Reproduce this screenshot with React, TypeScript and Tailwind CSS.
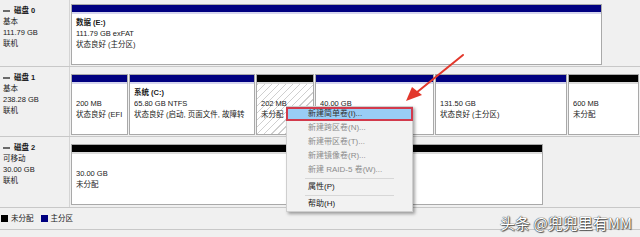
import React from "react";

const font = { fontFamily: '"Liberation Sans", "Noto Sans CJK SC", sans-serif' };

function Label({ name, lines }: { name: string; lines: string[] }) {
  return (
    <div className="w-[70px] shrink-0 border-r border-[#d4d4d4] bg-[#f0f0f0] pl-[3px] pt-[5px] text-[7.5px] leading-[11px] text-[#1a1a1a]">
      <div className="flex items-center gap-[4px] font-bold">
        <span className="inline-block h-[2px] w-[7px] bg-[#6a6a6a]" />
        <span>{name}</span>
      </div>
      {lines.map((l) => (
        <div key={l}>{l}</div>
      ))}
    </div>
  );
}

function Part({
  w,
  bar,
  title,
  lines,
  hatch,
}: {
  w: string;
  bar: "blue" | "black";
  title?: string;
  lines: string[];
  hatch?: boolean;
}) {
  return (
    <div className={`${w} flex h-[61px] shrink-0 flex-col overflow-hidden border border-[#a9a9a9] bg-white`}>
      <div
        className={
          bar === "blue"
            ? "h-[9px] shrink-0 border-b-[2px] border-[#d6d6ee] bg-[#000080]"
            : "h-[9px] shrink-0 border-b-[2px] border-[#dcdcdc] bg-black"
        }
      />
      <div
        className={
          hatch
            ? "flex-1 overflow-hidden whitespace-nowrap bg-[repeating-linear-gradient(135deg,#cfcfcf_0px,#cfcfcf_1px,#ffffff_1px,#ffffff_5px)] pl-[4px] pt-[3px] text-[7.5px] leading-[11px] text-[#1a1a1a]"
            : "flex-1 overflow-hidden whitespace-nowrap pl-[4px] pt-[3px] text-[7.5px] leading-[11px] text-[#1a1a1a]"
        }
      >
        <div className="h-[11px] font-bold">{title ?? ""}</div>
        {lines.map((l) => (
          <div key={l} className="overflow-hidden">
            {l}
          </div>
        ))}
      </div>
    </div>
  );
}

function MenuItem({ text, disabled, active }: { text: string; disabled?: boolean; active?: boolean }) {
  return (
    <div
      className={
        active
          ? "mx-[-1px] flex h-[14px] items-center border-[2px] border-[#d23a4c] bg-[#99cdf5] pl-[20px] text-[8px] text-[#333333]"
          : disabled
          ? "flex h-[14px] items-center pl-[21px] text-[8px] text-[#8c8c8c]"
          : "flex h-[14px] items-center pl-[21px] text-[8px] text-[#1a1a1a]"
      }
    >
      {text}
    </div>
  );
}

export default function App() {
  return (
    <div className="relative h-[237px] w-[640px] overflow-hidden bg-[#f0f0f0]" style={font}>
      {/* Disk 0 */}
      <div className="flex h-[67px] border-b border-[#c8c8c8]">
        <Label name="磁盘 0" lines={["基本", "111.79 GB", "联机"]} />
        <div className="flex flex-1 pl-[1px] pt-[4px]">
          <Part w="w-[531px]" bar="blue" title="数据  (E:)" lines={["111.79 GB exFAT", "状态良好 (主分区)"]} />
        </div>
      </div>
      {/* Disk 1 */}
      <div className="flex h-[70px] border-b border-[#c8c8c8]">
        <Label name="磁盘 1" lines={["基本", "238.28 GB", "联机"]} />
        <div className="flex flex-1 gap-[1px] pl-[1px] pt-[7px]">
          <Part w="w-[57px]" bar="blue" lines={["200 MB", "状态良好 (EFI"]} />
          <Part
            w="w-[126px]"
            bar="blue"
            title="系统  (C:)"
            lines={["65.80 GB NTFS", "状态良好 (启动, 页面文件, 故障转"]}
          />
          <Part w="w-[58px]" bar="black" hatch lines={["202 MB", "未分配"]} />
          <Part w="w-[119px]" bar="blue" lines={["40.00 GB"]} />
          <Part w="w-[132px]" bar="blue" lines={["131.50 GB", "状态良好 (主分区)"]} />
          <Part w="w-[71px]" bar="black" lines={["600 MB", "未分配"]} />
        </div>
      </div>
      {/* Disk 2 */}
      <div className="flex h-[71px] border-b border-[#c8c8c8]">
        <Label name="磁盘 2" lines={["可移动", "30.00 GB", "联机"]} />
        <div className="flex flex-1 pl-[1px] pt-[7px]">
          <Part w="w-[472px]" bar="black" lines={["30.00 GB", "未分配"]} />
        </div>
      </div>
      {/* Legend */}
      <div className="flex h-[22px] items-center gap-[3px] border-b border-[#c8c8c8] pl-[1px] text-[7.5px] text-[#1a1a1a]">
        <span className="inline-block h-[7px] w-[7px] bg-black" />
        <span className="mr-[4px]">未分配</span>
        <span className="inline-block h-[7px] w-[7px] bg-[#000080]" />
        <span>主分区</span>
      </div>

      {/* Context menu */}
      <div className="absolute left-[286px] top-[106px] w-[127px] border border-[#cfcfcf] bg-[#f2f2f2] shadow-[2px_2px_3px_rgba(0,0,0,0.35)]">
        <MenuItem text="新建简单卷(I)..." active />
        <MenuItem text="新建跨区卷(N)..." disabled />
        <MenuItem text="新建带区卷(T)..." disabled />
        <MenuItem text="新建镜像卷(R)..." disabled />
        <MenuItem text="新建 RAID-5 卷(W)..." disabled />
        <div className="mx-[18px] my-[1px] h-px bg-[#d7d7d7]" />
        <MenuItem text="属性(P)" />
        <div className="mx-[18px] my-[1px] h-px bg-[#d7d7d7]" />
        <MenuItem text="帮助(H)" />
      </div>

      {/* Red arrow annotation */}
      <svg className="pointer-events-none absolute left-0 top-0" width="640" height="237">
        <line x1="463" y1="55" x2="416" y2="93" stroke="#e2382c" strokeWidth="2" strokeLinecap="round" />
        <polygon points="406,101 412,87 422,95" fill="#e2382c" />
      </svg>

      {/* Watermark */}
      <div
        className="absolute bottom-[6px] right-[8px] text-[15px] leading-[16px] text-white [text-shadow:0_0_1px_#333,0_0_1px_#333,1px_1px_1px_#555]"
        style={{ fontFamily: '"Noto Sans CJK SC", sans-serif' }}
      >
        头条 @兜兜里有MM
      </div>
    </div>
  );
}
